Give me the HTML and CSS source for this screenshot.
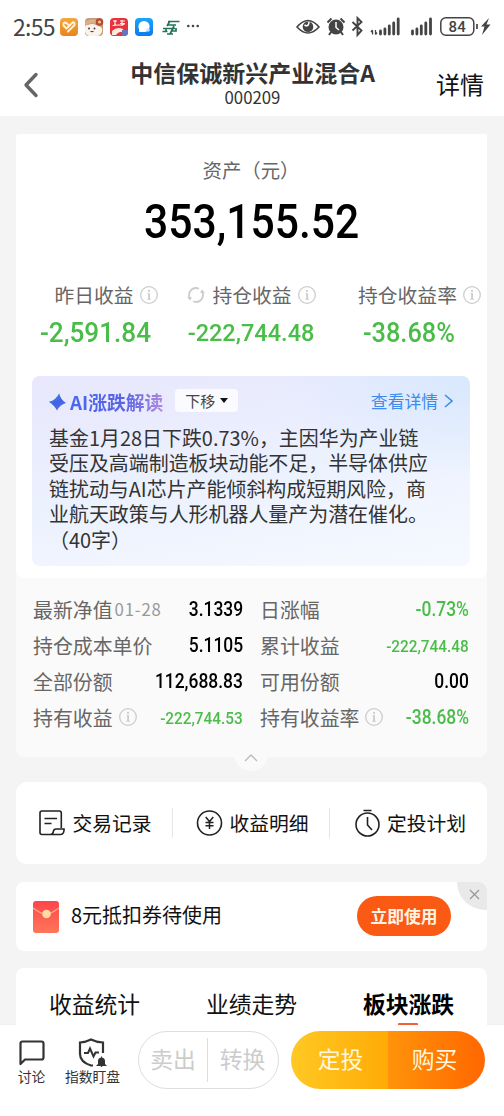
FILE: index.html
```html
<!DOCTYPE html>
<html lang="zh-CN">
<head>
<meta charset="utf-8">
<title>中信保诚新兴产业混合A</title>
<link rel="stylesheet" href="styles.css">
</head>
<body>
<svg class="defs" width="0" height="0">
  <defs>
    <symbol id="info" viewBox="0 0 18 18"><circle cx="9" cy="9" r="8.3" fill="none" stroke="#ccc" stroke-width="1.3"/><path d="M9.1 7.2V13.6" fill="none" stroke="#ccc" stroke-width="1.8"/><path d="M7.600 7.500h1.500M7.200 13.300h3.800" stroke="#ccc" stroke-width=".8"/><circle cx="9" cy="4.900" r="1.100" fill="#ccc"/></symbol>
    <linearGradient id="starfill" x1="0" x2="1" y1="0" y2="1"><stop stop-color="#3aa0f0"/><stop offset=".5" stop-color="#3f62e4"/><stop offset="1" stop-color="#6070ee"/></linearGradient>
    <linearGradient id="orange" x1="0" x2="0" y1="0" y2="1"><stop stop-color="#f3a840"/><stop offset="1" stop-color="#e8841c"/></linearGradient>
    <linearGradient id="blue" x1="0" x2="0" y1="0" y2="1"><stop stop-color="#1ba6f8"/><stop offset="1" stop-color="#0a7cf0"/></linearGradient>
    <linearGradient id="red" x1="0" x2="0" y1="0" y2="1"><stop stop-color="#fd464b"/><stop offset="1" stop-color="#ff7659"/></linearGradient>
  </defs>
</svg>
<div class="screen">
  <div class="status">
    <span class="clock">2:55</span>
    <svg class="apps" width="142" height="20" viewBox="0 0 142 20">
      <rect x="0" y="1" width="18" height="18" rx="4" fill="url(#orange)"/>
      <path d="M6.500 11.500L3.500 8.500Q3 6 5 5.500q1.500 0 4 3M6.500 11.500l5.500-5.500M8 14.500L14.500 8Q15 5.500 13 5.200" fill="none" stroke="#fff2dc" stroke-width="1.900" stroke-linecap="round"/>
      <rect x="25" y="1" width="18" height="18" rx="4" fill="#c99873"/>
      <path d="M25 10q1-3 3-2 4-2 8 0l5 2q2 2 1 5-2 4-5 4h-8q-4-2-4-5z" fill="#faf3ec"/><path d="M25 5q5-4 11-2l1 4q-6-2-12 1z" fill="#d9b08c"/><circle cx="39.500" cy="5" r="3.800" fill="#b54a35"/><circle cx="39.500" cy="5" r="1.600" fill="#f0c090"/><circle cx="29" cy="11.500" r=".9" fill="#333"/><circle cx="34.500" cy="11.500" r=".9" fill="#333"/><path d="M30 14q2 2.500 4 0z" fill="#633"/>
      <rect x="50" y="1" width="18" height="18" rx="4" fill="#e6333d"/>
      <path d="M53 4h4M55 3v6M60 4h5M60 6.500h5M62 3v6M52.500 8.500l12-1" stroke="#fff0e8" stroke-width="1.200"/><path d="M52 18v-4q5-5 11-2l1 3q-5-1-8 3z" fill="#ffe8dd"/><path d="M62 13h6v3q0 3-4 3h-2z" fill="#6673bd"/>
      <rect x="75" y="1" width="18" height="18" rx="4" fill="url(#blue)"/>
      <circle cx="84" cy="9.500" r="5.600" fill="#fff"/><path d="M79.500 11.500l-.500 3.500h4.500z" fill="#fff"/><circle cx="88" cy="13" r="1.800" fill="#bfe4ff"/>
      <path d="M108 4.500h11.500M107 8h9M103 11.500h12M102.500 14.500h5M110 4l-3 5M114 9l-4 8M107 17h6M116 11v3h-5M106 11v4" fill="none" stroke="#247257" stroke-width="1.700"/>
      <g fill="#444"><circle cx="128.300" cy="9" r="1.300"/><circle cx="133" cy="9" r="1.300"/><circle cx="137.700" cy="9" r="1.300"/></g>
    </svg>
    <svg class="system" width="196" height="22" viewBox="0 0 196 22">
      <path d="M1 11Q12-2 23 11Q12 23 1 11z" fill="none" stroke="#444" stroke-width="1.600"/><circle cx="12" cy="10.800" r="5.300" fill="#444"/><path d="M8.500 9q4 2.500 4.500-3" fill="none" stroke="#fff" stroke-width="1.600"/>
      <circle cx="40" cy="11" r="7.500" fill="#444"/><path d="M31.500 6.500l4-4M48.500 6.500l-4-4M35 16l-2 3M45 16l2 3" stroke="#444" stroke-width="2"/><path d="M40 6v5.500l3 2.500" fill="none" stroke="#fff" stroke-width="1.500"/>
      <path d="M56.500 6l9 8.500-4 4.500V2l4 4-9 8.500" fill="none" stroke="#444" stroke-width="1.900"/>
      <path d="M76.500 18.500v-4M75 16l1.500-2M79.500 14v4.500M81 16.500l-1.500 2" stroke="#444" stroke-width="1.300"/>
      <path d="M84.500 18v-3M88.900 18v-5M93.300 18v-8M97.700 18V7M102.200 18V3M116.500 18v-3M120.900 18v-5M125.300 18V10M129.800 18V7M134.500 18V3" stroke="#444" stroke-width="2.800" stroke-linecap="round"/>
      <rect x="144.800" y="1.800" width="33" height="17.500" rx="5" fill="none" stroke="#444" stroke-width="1.500"/><path d="M181 8v5" stroke="#444" stroke-width="1.700"/>
      <path d="M193 2l-8 8.500h3.500l-2.500 8.500 8.500-10.500h-4z" fill="#444"/>
      <text class="battery" x="161.300" y="16" text-anchor="middle">84</text>
    </svg>
  </div>
  <header class="nav">
    <svg class="back" width="16" height="26" viewBox="0 0 16 26"><path d="M13 2.500L3 13l10 10.500" fill="none" stroke="#666" stroke-width="3.400" stroke-linecap="round" stroke-linejoin="round"/></svg>
    <div class="title"><h1>中信保诚新兴产业混合A</h1><p>000209</p></div>
    <span class="more">详情</span>
  </header>

  <main class="content">
    <section class="asset">
      <div class="top">
        <p class="caption">资产（元）</p>
        <p class="total"><span class="num">353,155.52</span></p>
        <div class="stats">
          <div class="stat s1"><div class="lab">昨日收益<svg class="i"><use href="#info"/></svg></div><span class="num big">-2,591.84</span></div>
          <div class="stat s2"><div class="lab"><svg class="sync" width="18" height="18" viewBox="0 0 18 18"><path d="M3 12.500A7 7 0 0 1 9 2q1.500 0 3 .7M15 5.500A7 7 0 0 1 9 16q-1.500 0-3-.7" fill="none" stroke="#ccc" stroke-width="1.800"/><path d="M0 11l5 .5-2 3zM18 7l-5-.5 2-3z" fill="#ccc"/></svg>持仓收益<svg class="i"><use href="#info"/></svg></div><span class="num mid">-222,744.48</span></div>
          <div class="stat s3"><div class="lab">持仓收益率<svg class="i"><use href="#info"/></svg></div><span class="num pct">-38.68%</span></div>
        </div>
        <article class="ai">
          <div class="aihead">
            <svg width="17" height="18" viewBox="0 0 17 18"><path d="M8 0Q10.500 5.500 17 8Q12 10.500 10 17.500Q6.500 13 0 11Q6.500 7.500 8 0z" transform="rotate(14 8.500 9)" fill="url(#starfill)"/></svg>
            <b>AI涨跌解读</b>
            <span class="move">下移<i></i></span>
            <a class="link">查看详情<svg width="9" height="14" viewBox="0 0 9 14"><path d="M1 1l7 6-7 6" fill="none" stroke="#408bea" stroke-width="1.600"/></svg></a>
          </div>
          <p>基金1月28日下跌0.73%，主因华为产业链<br>受压及高端制造板块动能不足，半导体供应<br>链扰动与AI芯片产能倾斜构成短期风险，商<br>业航天政策与人形机器人量产为潜在催化。<br>（40字）</p>
        </article>
      </div>
      <div class="details">
        <div class="cell"><span>最新净值</span><small>01-28</small><span class="num val">3.1339</span></div>
        <div class="cell"><span>日涨幅</span><span class="num val g">-0.73%</span></div>
        <div class="cell"><span>持仓成本单价</span><span class="num val">5.1105</span></div>
        <div class="cell"><span>累计收益</span><span class="num val g sm">-222,744.48</span></div>
        <div class="cell"><span>全部份额</span><span class="num val">112,688.83</span></div>
        <div class="cell"><span>可用份额</span><span class="num val">0.00</span></div>
        <div class="cell"><span>持有收益</span><svg class="i"><use href="#info"/></svg><span class="num val g sm">-222,744.53</span></div>
        <div class="cell"><span>持有收益率</span><svg class="i"><use href="#info"/></svg><span class="num val g">-38.68%</span></div>
      </div>
      <div class="fold"><svg width="14" height="8" viewBox="0 0 14 8"><path d="M1 7l6-6 6 6" fill="none" stroke="#bbb" stroke-width="1.300"/></svg></div>
    </section>

    <section class="actions">
      <div class="action"><svg width="27" height="28" viewBox="0 0 27 28"><path d="M22.300 19V4q0-2-2-2H3Q1 2 1 4v19.500q0 2 2 2h8.500q2.500 0 3-3.300.3-2.200 2.500-2.200h8v1.500q-.5 4-3.500 4H11M5.500 9.500h12.500M5.500 14.500h7" fill="none" stroke="#222" stroke-width="1.600"/></svg><span>交易记录</span></div>
      <div class="action"><svg width="27" height="28" viewBox="0 0 27 28"><circle cx="13.500" cy="14" r="12" fill="none" stroke="#222" stroke-width="1.600"/><path d="M9.700 8l3.800 4.500L17.300 8M13.500 12.500v7.500M9.500 13.500h8M9.500 16.800h8" fill="none" stroke="#222" stroke-width="1.500"/></svg><span>收益明细</span></div>
      <div class="action"><svg width="27" height="28" viewBox="0 0 27 28"><circle cx="13.500" cy="15.500" r="11.500" fill="none" stroke="#222" stroke-width="1.600"/><path d="M9.500 1.500h8M13.500 8v8l4.500 5" fill="none" stroke="#222" stroke-width="1.600"/></svg><span>定投计划</span></div>
    </section>

    <section class="coupon">
      <svg width="26" height="32" viewBox="0 0 26 32"><rect width="26" height="32" rx="3" fill="url(#red)"/><path d="M0 7q8 6 13 6t13-6" fill="none" stroke="#ffad83" stroke-width="1.200"/><circle cx="13.500" cy="13" r="4.300" fill="#ffdba0"/></svg>
      <span>8元抵扣券待使用</span>
      <button class="use">立即使用</button>
      <i class="close"><svg width="11" height="11" viewBox="0 0 11 11"><path d="M1 1l9 9M10 1l-9 9" stroke="#999" stroke-width="1.300"/></svg></i>
    </section>

    <nav class="tabs"><span>收益统计</span><span>业绩走势</span><span class="on">板块涨跌</span></nav>
  </main>

  <footer class="bar">
    <div class="tool talk"><svg width="26" height="30" viewBox="0 0 26 30"><path d="M1.500 26V5.500q0-2 2-2h19q2 0 2 2v14q0 2-2 2H6z" fill="none" stroke="#333" stroke-width="2.200" stroke-linejoin="round"/></svg>讨论</div>
    <div class="tool watch"><svg width="30" height="30" viewBox="0 0 30 30"><path d="M25 15V4.500Q18 4 13 1.500 8 4 2 4.500V16q0 8 11 11.500h2" fill="none" stroke="#333" stroke-width="2.200"/><path d="M6 15h4l2-4.500 3.500 8 2-4H21" fill="none" stroke="#333" stroke-width="2"/><path d="M18 28l2-2v-3q0-3 3-3.500v-1h1v1q3 .5 3 3.500v3l2 2h-4.500q-1 2-2 0z" fill="#333"/></svg>指数盯盘</div>
    <div class="pill off"><span>卖出</span><span>转换</span></div>
    <div class="pill buy"><span>定投</span><span>购买</span></div>
  </footer>
</div>
</body>
</html>
```

FILE: styles.css
```css
* { box-sizing: border-box; margin: 0; padding: 0; }
body { background: #f4f4f4; font-family: "Noto Sans CJK SC", "Noto Sans", sans-serif; color: #111; }
.defs { position: absolute; }
svg { flex: none; display: block; }
.screen { width: 504px; height: 1116px; overflow: hidden; display: flex; flex-direction: column; white-space: nowrap; }

.status { height: 54px; flex: none; background: #fff; display: flex; align-items: center; padding: 0 13px 0 13px; }
.clock { font-size: 23px; color: #444; width: 47px; letter-spacing: -.7px; line-height: 52px; height: 54px; }
.apps { margin-top: 0; }
.system { margin-left: auto; margin-right: -1px; margin-top: 0; }
.battery { font: 500 15px Roboto, sans-serif; fill: #444; letter-spacing: .3px; }

.nav { height: 62px; flex: none; background: #fff; display: grid; grid-template-columns: 60px 1fr 60px; align-items: start; padding: 0 20px 0 23px; }
.back { margin-top: 18px; }
.title { text-align: center; padding-top: 3px; margin: 0 -10px 0 -12px; }
.title h1 { font-size: 23px; line-height: 31px; font-weight: 700; color: #333; }
.title p { font-size: 16.8px; line-height: 18px; color: #333; }
.more { font-size: 24px; line-height: 34px; padding-top: 13px; text-align: right; color: #111; }

.content { flex: 1; min-height: 0; padding: 18px 17px 0 16px; display: flex; flex-direction: column; }
.asset { flex: none; height: 623px; background: #fafafa; border-radius: 3px 3px 8px 8px; position: relative; }
.top { height: 444px; background: #fff; border-radius: 3px 3px 8px 8px; padding: 21px 17px 0 16px; }
.caption { text-align: center; font-size: 19.4px; line-height: 29px; color: #666; }
.num { font-family: Roboto, sans-serif; font-weight: 500; display: inline-block; }
.total { text-align: center; height: 58px; margin-top: 8px; line-height: 59px; color: #000; padding-left: 2px; }
.total .num { font-size: 49px; transform: scaleX(.87); }
.stats { display: flex; margin-top: 30px; height: 96px; }
.stat { display: flex; flex-direction: column; align-items: center; flex: none; }
.s1 { width: 126px; }
.s2 { width: 187px; }
.s3 { width: 125px; align-items: flex-start; padding-left: 13px; }
.lab { display: flex; align-items: center; font-size: 19.8px; line-height: 30px; color: #666; }
.s1 .lab { padding-left: 22px; }
.i { width: 18px; height: 18px; margin-left: 6px; }
.sync { margin-right: 7px; }
.stat .num { color: #49bd48; line-height: 37px; margin-top: 4px; }
.big { font-size: 27.5px; transform: scaleX(.95); }
.mid { font-size: 24.5px; transform: scaleX(.96); }
.pct { font-size: 27.5px; transform: scaleX(.92); transform-origin: left; margin-left: 5px; }

.ai { height: 190px; border-radius: 8px; padding: 11px 16px 0 17px; background: radial-gradient(ellipse 190px 100px at 100% 0, #d8e8fd, rgba(216,232,253,0)), linear-gradient(170deg, #e8e7fc, #ecf2fe 55%, #f6f9ff); }
.aihead { height: 30px; display: flex; align-items: center; }
.aihead b { font-size: 18.8px; margin-left: 4px; line-height: 28px; background: linear-gradient(90deg, #4769ed, #5c63e4 60%, #ad8bdc); -webkit-background-clip: text; background-clip: text; color: transparent; }
.move { margin-left: 12px; width: 63px; height: 23px; margin-bottom: 3px; border-radius: 4px; background: #fbfbff; font-size: 15px; color: #444; display: flex; align-items: center; justify-content: center; gap: 5px; }
.move i { border: 4.5px solid transparent; border-top: 5px solid #111; border-bottom: 0; }
.link { margin-left: auto; display: flex; align-items: center; gap: 6px; font-size: 16.8px; margin-bottom: 2px; color: #408bea; }
.link svg { margin-right: 1px; }
.ai p { font-size: 19.95px; line-height: 25.4px; margin-top: 8px; color: #333; }

.details { display: grid; grid-template-columns: 210px 209px; column-gap: 17px; padding: 14px 17px 0; grid-auto-rows: 36px; }
.cell { display: flex; align-items: center; font-size: 19.9px; color: #666; height: 34px; }
.cell small { font-size: 16.8px; margin-left: 2px; letter-spacing: .8px; color: #999; }
.cell .val { margin-left: auto; color: #000; font-size: 19.6px; line-height: 34px; padding-top: 1px; transform: scaleX(.89); transform-origin: right; }
.cell .g { color: #49bd48; }
.cell .sm { font-size: 17px; transform: scaleX(.9); }
.fold { position: absolute; left: 218px; top: 603px; width: 34px; height: 34px; border-radius: 50%; background: #fafafa; display: flex; align-items: center; justify-content: center; padding-top: 7px; }

.actions { flex: none; height: 82px; margin-top: 25px; background: #fff; border-radius: 11px; display: grid; grid-template-columns: 156px 157px 158px; align-items: center; }
.action { height: 30px; display: flex; align-items: center; justify-content: center; gap: 6px; font-size: 19.8px; color: #111; padding-left: 3px; }
.action span { line-height: 29px; height: 31px; }
.action + .action { border-left: 1px solid #e6e6e6; }
.coupon { flex: none; height: 69px; margin-top: 18px; background: #fff; border-radius: 8px; display: flex; align-items: center; padding: 0 36px 0 17px; font-size: 20px; position: relative; overflow: hidden; }
.coupon span { margin-left: 12px; line-height: 30px; padding-bottom: 3px; }
.use { margin-left: auto; width: 94px; height: 40px; margin-bottom: 2px; border: 0; border-radius: 20px; background: #fa5a14; color: #fff4e4; font: 700 16.8px "Noto Sans CJK SC", sans-serif; }
.close { position: absolute; right: 0; top: 0; width: 30px; height: 28px; border-radius: 0 8px 0 28px; background: #e9e9e9; display: flex; align-items: center; justify-content: center; padding: 0 0 3px 4px; }
.tabs { height: 57px; flex: none; margin-top: 17px; background: #fff; border-radius: 8px 8px 0 0; display: grid; grid-template-columns: repeat(3, 157px); font-size: 22.8px; text-align: center; line-height: 71px; position: relative; }
.tabs .on { font-weight: 700; color: #000; }
.tabs .on::after { content: ""; position: absolute; left: 382px; bottom: 0; width: 20px; height: 2px; border-radius: 1px 1px 0 0; background: #ed6335; }

.bar { height: 92px; flex: none; background: #fff; border-top: 1px solid #efefef; display: flex; padding-top: 6px; }
.tool { display: flex; flex-direction: column; align-items: center; font-size: 13.8px; line-height: 17px; color: #333; padding-top: 7px; }
.talk { width: 63px; }
.watch { width: 59px; }
.pill { display: flex; height: 58px; border-radius: 29px; font-size: 22.8px; overflow: hidden; flex: none; }
.off { width: 141px; margin-left: 16px; border: 1px solid #ddd; color: #ccc; align-items: center; }
.off span { width: 69px; height: 44px; line-height: 42px; text-align: center; }
.off span:first-child { border-right: 1px solid #ddd; }
.buy { width: 194px; margin-left: 12px; color: #fff7de; }
.buy span { width: 97px; line-height: 56px; padding-left: 2px; text-align: center; background: linear-gradient(90deg, #ffc824, #ffab06); }
.buy span + span { padding: 0 4px 0 0; background: linear-gradient(90deg, #ff930a, #ff6700); }
```
